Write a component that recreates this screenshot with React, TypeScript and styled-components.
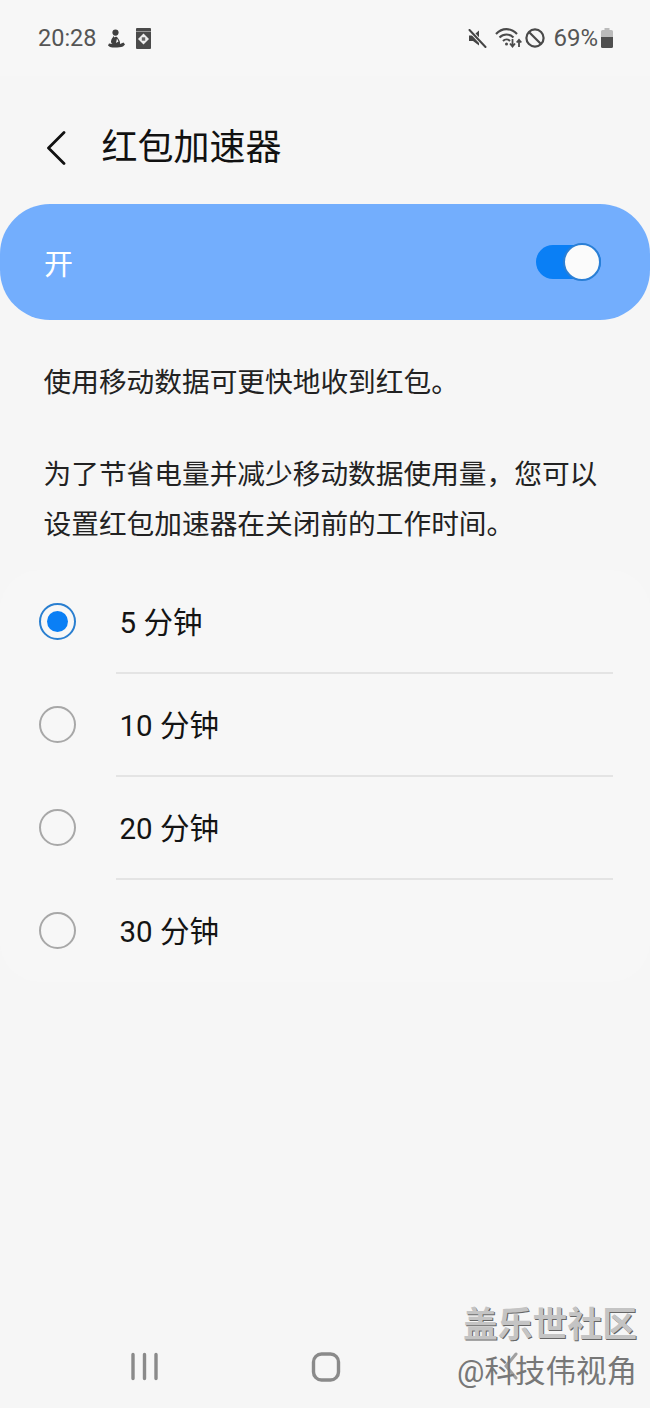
import styled, { createGlobalStyle } from "styled-components";

const GlobalStyle = createGlobalStyle`
  html, body {
    margin: 0;
    padding: 0;
    background: #f6f6f6;
  }
`;

const cjk = `"Roboto", "Noto Sans CJK SC", sans-serif`;

const Screen = styled.div`
  position: relative;
  width: 650px;
  height: 1408px;
  overflow: hidden;
  background: #f6f6f6;
  font-family: ${cjk};
  color: #111;
  display: flex;
  flex-direction: column;
`;

const StatusBar = styled.div`
  height: 76px;
  padding: 0 37px 0 38px;
  box-sizing: border-box;
  display: flex;
  align-items: center;
  justify-content: space-between;
  color: #555;
  background: #f7f7f7;
  font-size: 23.5px;
`;

const StatusGroup = styled.div`
  display: flex;
  align-items: center;
`;

const Clock = styled.span`
  margin-right: 11px;
`;

const Percent = styled.span`
  margin: 0 3px 0 8px;
  font-size: 24px;
`;

const TitleRow = styled.div`
  height: 128px;
  padding: 15px 0 0 46px;
  box-sizing: border-box;
  display: flex;
  align-items: center;
`;

const Title = styled.h1`
  margin: 0 0 0 35.5px;
  font-size: 36px;
  font-weight: 400;
  line-height: 1;
`;

const Banner = styled.div`
  height: 116px;
  padding: 0 49px 0 44px;
  box-sizing: border-box;
  border-radius: 50px;
  background: #73aefd;
  color: #fff;
  font-size: 29px;
  display: flex;
  align-items: center;
  justify-content: space-between;
`;

const Toggle = styled.div`
  position: relative;
  width: 65px;
  height: 34px;
  border-radius: 17px;
  background: #0a7ff5;
`;

const Knob = styled.div`
  position: absolute;
  right: 0;
  top: -2px;
  width: 38px;
  height: 38px;
  box-sizing: border-box;
  border-radius: 50%;
  background: #fbfbfb;
  border: 2px solid #2a7fd6;
`;

const Description = styled.div`
  padding: 38px 43px 0 43.5px;
  font-size: 27.7px;
  line-height: 50px;
  color: #222;
`;

const Paragraph = styled.p`
  margin: 0 0 42px;
  white-space: nowrap;

  &:last-child {
    margin-bottom: 20px;
  }
`;

const OptionList = styled.div`
  padding: 0 37px 0 39px;
  background: #f7f7f7;
  border-radius: 40px;
`;

const Option = styled.div`
  position: relative;
  height: 103px;
  display: flex;
  align-items: center;
`;

const Divider = styled.div`
  position: absolute;
  left: 77px;
  right: 0;
  bottom: -1px;
  height: 2px;
  background: #e4e4e4;
`;

const Radio = styled.div<{ $checked?: boolean }>`
  width: 37px;
  height: 37px;
  box-sizing: border-box;
  border-radius: 50%;
  border: 2px solid ${(p) => (p.$checked ? "#2a7fd0" : "#a8a8a8")};
  display: flex;
  align-items: center;
  justify-content: center;
`;

const RadioDot = styled.div`
  width: 21px;
  height: 21px;
  border-radius: 50%;
  background: #0a7ff5;
`;

const OptionLabel = styled.span`
  margin: 0 0 3px 43.5px;
  font-size: 29.5px;
  color: #141414;
`;

const NavBar = styled.div`
  position: absolute;
  left: 0;
  right: 0;
  bottom: 26px;
  height: 30px;
`;

const NavIcon = styled.svg<{ $left: number }>`
  position: absolute;
  left: ${(p) => p.$left}px;
  top: 0;
`;

const Watermark = styled.div`
  position: absolute;
  right: 13px;
  bottom: 16px;
  text-align: right;
`;

const WatermarkTitle = styled.div`
  font-size: 34.8px;
  font-weight: 700;
  line-height: 40px;
  color: #c4c4c4;
  text-shadow: 1px 1px 0 #666;
`;

const WatermarkName = styled.div`
  margin-top: 7px;
  font-size: 30.5px;
  line-height: 40px;
  color: #777;
`;

const options = ["5 分钟", "10 分钟", "20 分钟", "30 分钟"];

export default function App() {
  return (
    <>
      <GlobalStyle />
      <Screen>
        <StatusBar>
          <StatusGroup>
            <Clock>20:28</Clock>
            <svg width="17" height="19" viewBox="0 0 17 19" style={{ marginRight: 11 }}>
              <circle cx="7.5" cy="3.6" r="3.1" fill="#3f3f3f" />
              <path d="M6 6.5c-1 2-3 3.5-3 6 0 1 .5 2 1.5 2.5L1 14.5l-1 2 2 1.5c3 .8 9 .8 13-.5l2-2-1.5-2-3.500 1.500c.5-3-1.500-5-3-7-.7-.5-2-.5-3 .5z" fill="#3f3f3f" />
              <path d="M9 9.5l1.500 3-2.500 1.500z" fill="#f7f7f7" />
            </svg>
            <svg width="15" height="21" viewBox="0 0 15 21">
              <rect width="15" height="21" rx="1" fill="#4a4a4a" />
              <rect y="3" width="15" height="0.8" fill="#aaa" />
              <path d="M7.5 5.5l5.5 5.5-5.5 5.5L2 11z" fill="#eee" />
              <rect x="5.8" y="9.3" width="3.4" height="3.4" fill="#666" />
            </svg>
          </StatusGroup>
          <StatusGroup>
            <svg width="19" height="19" viewBox="0 0 19 19" style={{ marginRight: 8 }}>
              <path d="M1 6.5h4L11 1.5v15L5 12H1z" fill="#444" />
              <path d="M1.5 1l16 17" stroke="#f7f7f7" strokeWidth="4" />
              <path d="M1.5 1l16 17" stroke="#444" strokeWidth="2" strokeLinecap="round" />
            </svg>
            <svg width="27" height="22" viewBox="0 0 27 22" style={{ marginRight: 3 }}>
              <path d="M1 7c6-6.5 15-6.5 21 0" fill="none" stroke="#4a4a4a" strokeWidth="2.1" />
              <path d="M4.5 10.5c4-4 10-4 14 0" fill="none" stroke="#4a4a4a" strokeWidth="2.1" />
              <path d="M8 14c2-2 5-2 7 0" fill="none" stroke="#4a4a4a" strokeWidth="2.1" />
              <circle cx="11.5" cy="17" r="1.5" fill="#4a4a4a" />
              <path d="M17.5 12v7.5M15 16.5l2.5 3 2.5-3M24 20v-7M21.7 15.5l2.3-2.7 2.300 2.700" fill="none" stroke="#4a4a4a" strokeWidth="1.8" />
            </svg>
            <svg width="20" height="20" viewBox="0 0 20 20">
              <circle cx="10" cy="10" r="8.6" fill="none" stroke="#4a4a4a" strokeWidth="2.2" />
              <path d="M4 4l12 12" stroke="#4a4a4a" strokeWidth="2.2" />
            </svg>
            <Percent>69%</Percent>
            <svg width="12" height="20" viewBox="0 0 12 20">
              <path d="M3.5 0h5v2h2a1.5 1.5 0 0 1 1.5 1.5V9H0V3.5A1.5 1.5 0 0 1 1.5 2h2z" fill="#bbb" />
              <path d="M0 9h12v9.5a1.5 1.5 0 0 1-1.5 1.5h-9A1.5 1.5 0 0 1 0 18.5z" fill="#4f4f4f" />
            </svg>
          </StatusGroup>
        </StatusBar>

        <TitleRow>
          <svg width="20" height="34" viewBox="0 0 20 34">
            <path d="M18 1.5L2.5 17 18 32.5" fill="none" stroke="#111" strokeWidth="2.8" strokeLinecap="round" strokeLinejoin="round" />
          </svg>
          <Title>红包加速器</Title>
        </TitleRow>

        <Banner>
          <span>开</span>
          <Toggle>
            <Knob />
          </Toggle>
        </Banner>

        <Description>
          <Paragraph>使用移动数据可更快地收到红包。</Paragraph>
          <Paragraph>
            为了节省电量并减少移动数据使用量，您可以
            <br />
            设置红包加速器在关闭前的工作时间。
          </Paragraph>
        </Description>

        <OptionList>
          {options.map((label, i) => (
            <Option key={label}>
              <Radio $checked={i === 0}>{i === 0 && <RadioDot />}</Radio>
              <OptionLabel>{label}</OptionLabel>
              {i < options.length - 1 && <Divider />}
            </Option>
          ))}
        </OptionList>

        <NavBar>
          <NavIcon $left={131} width="27" height="30" viewBox="0 0 27 30">
            <path d="M2 2.5v24M13.5 2.5v24M25 2.5v24" stroke="#8a8a8a" strokeWidth="3.4" strokeLinecap="round" />
          </NavIcon>
          <NavIcon $left={311} width="30" height="30" viewBox="0 0 30 30">
            <rect x="2.5" y="2" width="25" height="26" rx="8" fill="none" stroke="#8a8a8a" strokeWidth="3.4" />
          </NavIcon>
          <NavIcon $left={500} width="20" height="30" viewBox="0 0 20 30">
            <path d="M16 2L6 14l10 12" fill="none" stroke="#a0a0a0" strokeWidth="3" strokeLinecap="round" />
          </NavIcon>
        </NavBar>

        <Watermark>
          <WatermarkTitle>盖乐世社区</WatermarkTitle>
          <WatermarkName>@科技伟视角</WatermarkName>
        </Watermark>
      </Screen>
    </>
  );
}
